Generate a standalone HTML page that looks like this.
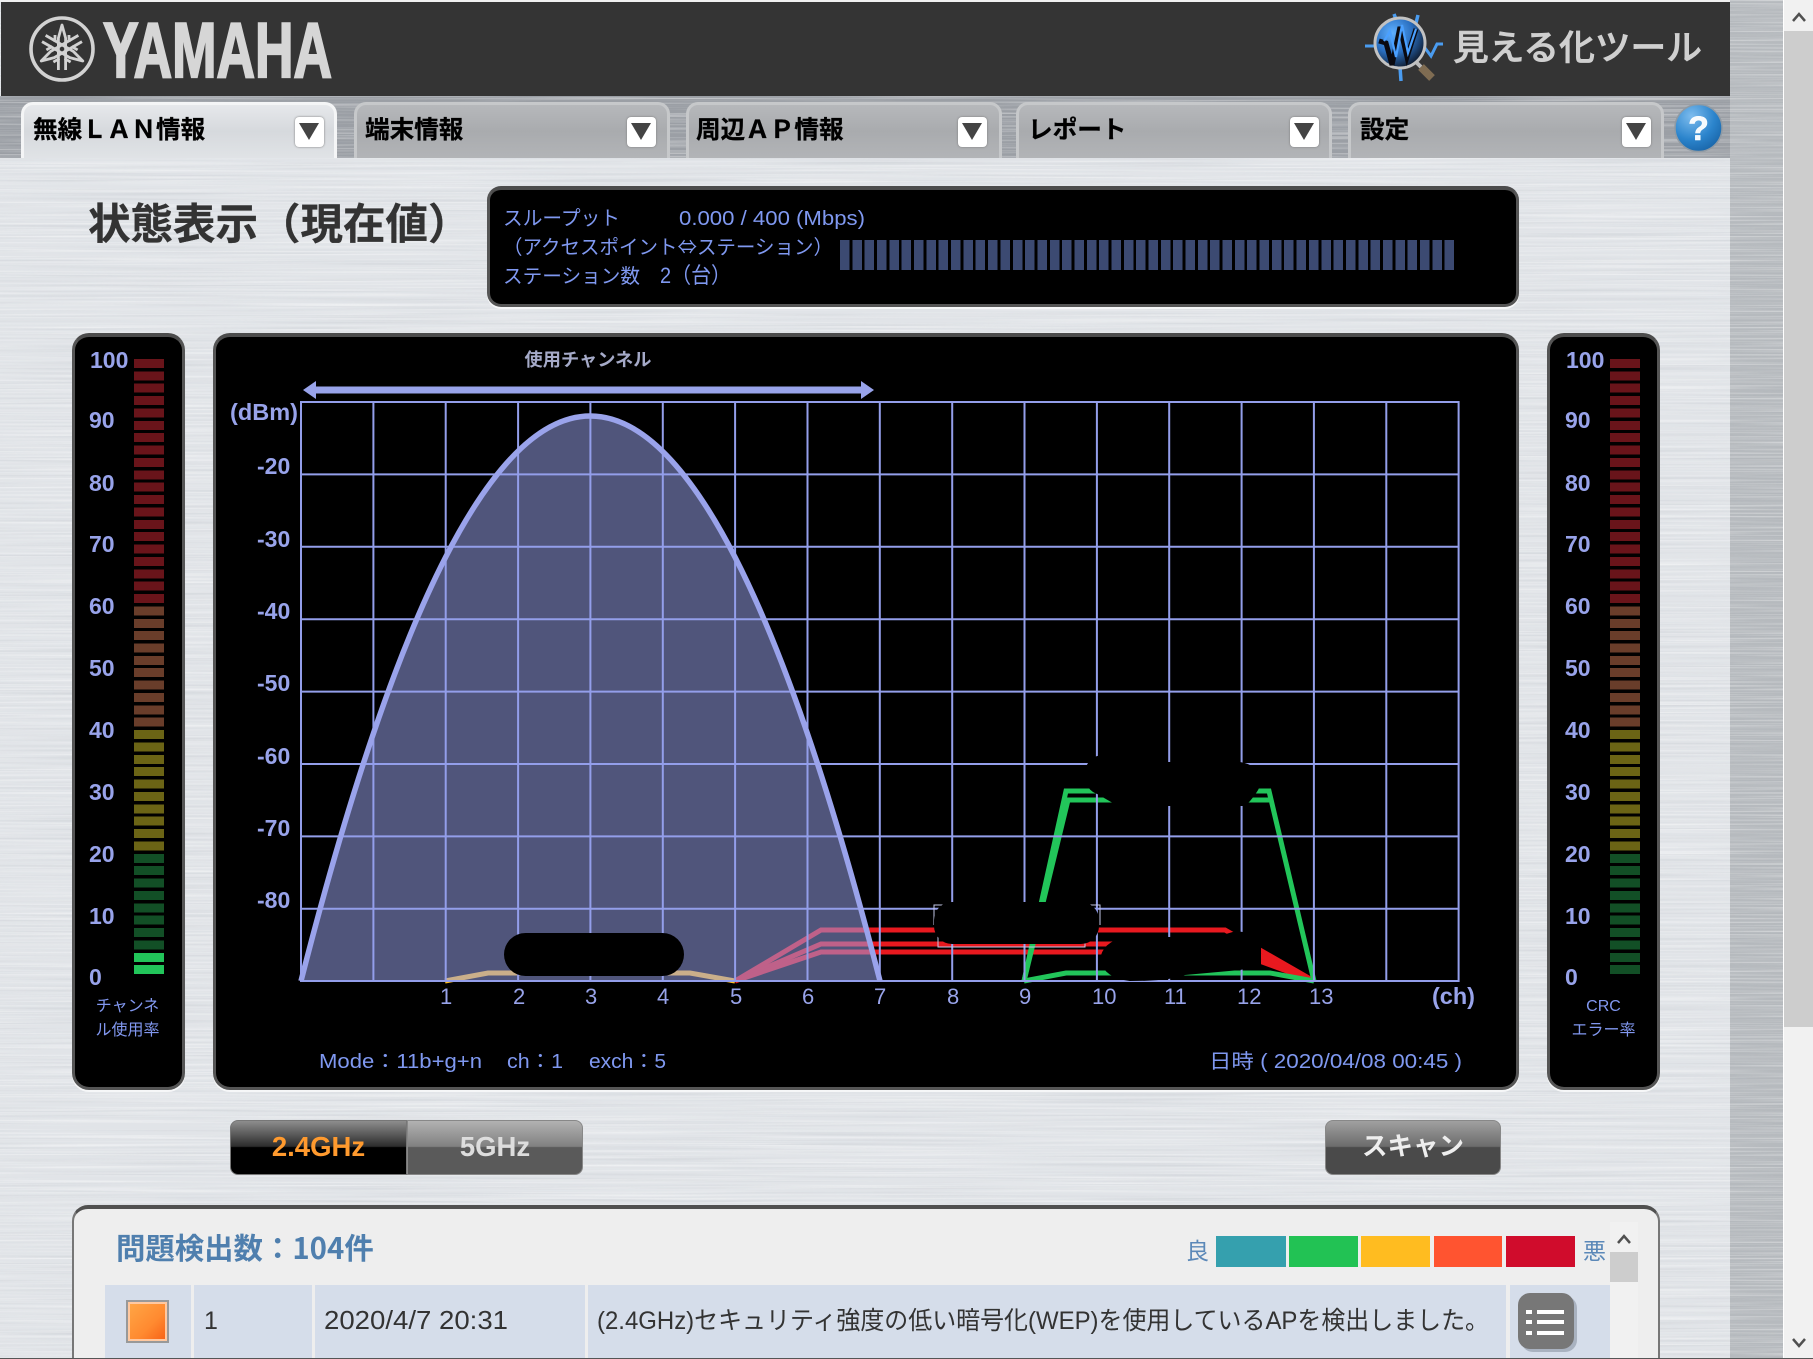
<!DOCTYPE html>
<html lang="ja"><head><meta charset="utf-8"><title>YAMAHA 見える化ツール</title>
<style>
html,body{margin:0;padding:0;width:1813px;height:1359px;overflow:hidden;background:#e2e5e9}
*{box-sizing:border-box}
body{position:relative;font-family:"Liberation Sans","Noto Sans CJK JP",sans-serif}
.a{position:absolute}
.t{position:absolute;white-space:nowrap;line-height:1}
.tab{position:absolute;top:102px;height:56px;width:316px;border:3px solid #c6c8ca;border-bottom:0;border-radius:12px 12px 0 0;background:linear-gradient(#b6b8bb,#a9abae 50%,#b2b4b7)}
.tab.on{border-color:#f4f5f6;background:linear-gradient(#e6e8eb,#d6d9dd 50%,#e0e3e6)}
.tt{position:absolute;top:116px;font-size:24.600px;font-weight:700;color:#000;line-height:1;white-space:nowrap;font-family:"Noto Sans CJK JP",sans-serif;-webkit-text-stroke:.3px #000}
.dd{position:absolute;top:117px;width:29px;height:30px;background:#fff;border-radius:4px;box-shadow:0 0 2px #777}
.dd:after{content:"";position:absolute;left:4px;top:6px;border-left:10.5px solid transparent;border-right:10.5px solid transparent;border-top:17px solid #444}
.panel{position:absolute;background:#000;border:3px solid #555;border-top:4px solid #4c4c4c;border-radius:17px;box-shadow:0 2px 0 #f6f7f8}
.meter{position:absolute;top:359px;width:30px;height:616px;background:repeating-linear-gradient(to bottom,transparent 0,transparent 9px,#000 9px,#000 12.37px),linear-gradient(to bottom,#69141a 0,#69141a 247px,#693d2a 247px,#693d2a 371px,#6b6415 371px,#6b6415 494px,#124f26 494px,#124f26 593px,#22c55a 593px,#22c55a 616px)}
.n{position:absolute;font-weight:700;font-size:23px;line-height:1;color:#98a3ea}
.ml{position:absolute;width:113px;text-align:center;font-size:16px;color:#8197ef;line-height:24px;font-family:"Liberation Sans","Noto Sans CJK JP",sans-serif}
.btn{position:absolute;top:1120px;height:55px;color:#eee;font-weight:700;font-size:27.500px;text-align:center;line-height:52px;font-family:"Liberation Sans","Noto Sans CJK JP",sans-serif}
.cell{position:absolute;top:1285px;height:74px;background:#d5ddea}
.sw{position:absolute;top:1236px;height:31px}
</style></head><body>

<svg class="a" style="left:0;top:0" width="1813" height="1359">
<defs><filter id="br" x="0" y="0" width="100%" height="100%"><feTurbulence type="fractalNoise" baseFrequency="0.004 0.55" numOctaves="2" seed="7"/><feColorMatrix values="0 0 0 0 1 0 0 0 0 1 0 0 0 0 1 2.6 0 0 0 -1.15"/></filter>
<filter id="br2" x="0" y="0" width="100%" height="100%"><feTurbulence type="fractalNoise" baseFrequency="0.004 0.4" numOctaves="2" seed="21"/><feColorMatrix values="0 0 0 0 0.35 0 0 0 0 0.38 0 0 0 0 0.42 2.2 0 0 0 -1.05"/></filter></defs>
<rect width="1730" height="1359" fill="#e1e4e8"/>
<rect y="96" width="1730" height="62" fill="#9b9fa5"/>
<rect x="1730" width="54" height="1359" fill="#b6babe"/>
<rect width="1784" height="1359" filter="url(#br)" opacity=".45"/>
<rect width="1784" height="1359" filter="url(#br2)" opacity=".22"/>
</svg>

<!-- header -->
<div class="a" style="left:0;top:0;width:1730px;height:2px;background:#f0f0f0"></div>
<div class="a" style="left:1px;top:2px;width:1729px;height:94px;background:#343434"></div>
<svg class="a" style="left:0;top:0" width="1730" height="96">
<circle cx="62" cy="49" r="31" fill="none" stroke="#d2d2d2" stroke-width="3.6"/>
<g fill="none" stroke="#d2d2d2" stroke-width="2.800" stroke-linejoin="round">
<g transform="translate(62,49)"><path d="M-3.6 21V-11L0 -24L3.6 -11V21"/><path d="M-7 -7V-14M7 -7V-14"/></g>
<g transform="translate(62,49) rotate(120)"><path d="M-3.6 21V-11L0 -24L3.6 -11V21"/><path d="M-7 -7V-14M7 -7V-14"/></g>
<g transform="translate(62,49) rotate(240)"><path d="M-3.6 21V-11L0 -24L3.6 -11V21"/><path d="M-7 -7V-14M7 -7V-14"/></g>
</g>
<text x="103" y="77" font-family="Liberation Sans" font-weight="700" font-size="78" fill="#d6d6d6" stroke="#d6d6d6" stroke-width="2.2" textLength="229" lengthAdjust="spacingAndGlyphs">YAMAHA</text>
<defs><radialGradient id="mg" cx=".35" cy=".3" r=".8"><stop offset="0" stop-color="#5fb0ff"/><stop offset=".5" stop-color="#2a6fc0"/><stop offset="1" stop-color="#0a0a10"/></radialGradient></defs>
<path d="M1365 46H1375M1425 48l6 8 6-12h6" fill="none" stroke="#4a9cf0" stroke-width="3"/>
<path d="M1394 14l3 8M1418 15l-2 8M1401 81l-1-14" fill="none" stroke="#4a9cf0" stroke-width="3.5"/>
<circle cx="1400" cy="43" r="25" fill="url(#mg)" stroke="#c2c2c2" stroke-width="3"/>
<path d="M1379 41l7 2 6 22 8-38 7 30 9-28" fill="none" stroke="#0a0a10" stroke-width="5"/>
<path d="M1384 41l6-10 6 26 6-32 6 28 8-24" fill="none" stroke="#4aa0ff" stroke-width="2.2"/>
<path d="M1417 63l4 4" stroke="#bbb" stroke-width="4"/><path d="M1421 67l11 11" stroke="#7f6c52" stroke-width="8"/>
<text x="1453" y="60" font-family="Noto Sans CJK JP" font-weight="500" font-size="35" fill="#cfcfcf" stroke="#cfcfcf" stroke-width=".7" textLength="249" lengthAdjust="spacingAndGlyphs">見える化ツール</text>
</svg>

<!-- tabs -->
<div class="tab on" style="left:21px"></div><div class="tab" style="left:354px"></div><div class="tab" style="left:686px"></div><div class="tab" style="left:1016px"></div><div class="tab" style="left:1348px"></div>
<div class="tt" style="left:33px">無線ＬＡＮ情報</div><div class="tt" style="left:365px">端末情報</div><div class="tt" style="left:696px">周辺ＡＰ情報</div><div class="tt" style="left:1028px">レポート</div><div class="tt" style="left:1360px">設定</div>
<div class="dd" style="left:295px"></div><div class="dd" style="left:627px"></div><div class="dd" style="left:958px"></div><div class="dd" style="left:1290px"></div><div class="dd" style="left:1622px"></div>
<svg class="a" style="left:1673px;top:101px" width="52" height="54"><defs><radialGradient id="hg2" cx=".35" cy=".25" r=".9"><stop offset="0" stop-color="#7dbcee"/><stop offset=".55" stop-color="#2b84cc"/><stop offset="1" stop-color="#145c9e"/></radialGradient></defs><circle cx="25.5" cy="27" r="23.5" fill="url(#hg2)" stroke="#8f9aa4" stroke-width="1.5"/><text x="25.5" y="39" text-anchor="middle" font-family="Liberation Sans" font-weight="700" font-size="34" fill="#fff" stroke="#fff" stroke-width=".6" fill-opacity=".95">?</text></svg>

<!-- title -->
<div class="t" style="left:88px;top:201px;font-size:42.500px;font-weight:700;color:#333;font-family:'Noto Sans CJK JP',sans-serif;-webkit-text-stroke:.3px #333">状態表示（現在値）</div>

<!-- status -->
<div class="panel" style="left:487px;top:186px;width:1032px;height:121px;border-radius:14px"></div>
<svg class="a" style="left:0;top:0" width="1813" height="340" font-family="Liberation Sans,Noto Sans CJK JP" font-size="20" fill="#7f98f0">
<text x="503" y="225" textLength="117" lengthAdjust="spacingAndGlyphs">スループット</text>
<text x="679" y="225" textLength="186" lengthAdjust="spacingAndGlyphs">0.000 / 400 (Mbps)</text>
<text x="503" y="254" textLength="330" lengthAdjust="spacingAndGlyphs" font-family="Noto Sans CJK JP">（アクセスポイント⇔ステーション）</text>
<text x="503" y="283" textLength="137" lengthAdjust="spacingAndGlyphs">ステーション数</text>
<text x="660" y="283" textLength="71" lengthAdjust="spacingAndGlyphs" font-size="22">2（台）</text>
</svg>
<div class="a" style="left:840px;top:240px;width:615px;height:30px;background:repeating-linear-gradient(to right,#3c4a72 0,#3c4a72 9.5px,#000 9.5px,#000 12.34px)"></div>

<!-- panels -->
<div class="panel" style="left:72px;top:333px;width:113px;height:757px"></div>
<div class="panel" style="left:213px;top:333px;width:1306px;height:757px"></div>
<div class="panel" style="left:1547px;top:333px;width:113px;height:757px"></div>
<div class="meter" style="left:134px"></div>
<div class="meter" style="left:1610px;background:repeating-linear-gradient(to bottom,transparent 0,transparent 9px,#000 9px,#000 12.37px),linear-gradient(to bottom,#69141a 0,#69141a 247px,#693d2a 247px,#693d2a 371px,#6b6415 371px,#6b6415 494px,#124f26 494px)"></div>

<div class="n" style="left:90px;top:349px">100</div><div class="n" style="left:89px;top:409px">90</div><div class="n" style="left:89px;top:472px">80</div><div class="n" style="left:89px;top:533px">70</div><div class="n" style="left:89px;top:595px">60</div><div class="n" style="left:89px;top:657px">50</div><div class="n" style="left:89px;top:719px">40</div><div class="n" style="left:89px;top:781px">30</div><div class="n" style="left:89px;top:843px">20</div><div class="n" style="left:89px;top:905px">10</div><div class="n" style="left:89px;top:966px">0</div>
<div class="n" style="left:1566px;top:349px">100</div><div class="n" style="left:1565px;top:409px">90</div><div class="n" style="left:1565px;top:472px">80</div><div class="n" style="left:1565px;top:533px">70</div><div class="n" style="left:1565px;top:595px">60</div><div class="n" style="left:1565px;top:657px">50</div><div class="n" style="left:1565px;top:719px">40</div><div class="n" style="left:1565px;top:781px">30</div><div class="n" style="left:1565px;top:843px">20</div><div class="n" style="left:1565px;top:905px">10</div><div class="n" style="left:1565px;top:966px">0</div>
<div class="ml" style="left:71px;top:995px">チャンネ<br>ル使用率</div>
<div class="ml" style="left:1547px;top:995px">CRC<br>エラー率</div>

<!-- chart -->
<svg class="a" style="left:0;top:0" width="1813" height="1100" font-family="Liberation Sans,Noto Sans CJK JP">
<!-- arrow -->
<text x="588" y="366" text-anchor="middle" font-size="18" font-weight="700" fill="#a5aac8" textLength="127" lengthAdjust="spacingAndGlyphs">使用チャンネル</text>
<path d="M303 390L316 381V386.500H861V381L874 390L861 399V393.500H316V399Z" fill="#98a3ea"/>
<!-- signal lines under fill -->
<g fill="none" stroke-width="5" stroke-linejoin="miter">
<path d="M445 981L488 973H690L735 981" stroke="#ffbc20"/>
<path d="M735 981L821 930H1225L1314 981" stroke="#e8191f"/>
<path d="M735 981L821 944H1235L1314 981" stroke="#e8191f"/>
<path d="M735 981L821 952H1235L1314 981" stroke="#e8191f"/>
<path d="M1024 981L1066 791H1269L1314 981" stroke="#22c55a"/>
<path d="M1024 981L1068 800H1269" stroke="#22c55a"/>
<path d="M1024 981L1066 973H1270L1314 981" stroke="#22c55a"/>
</g>
<!-- fill -->
<path d="M301 981Q590 -149 880 981Z" fill="#9aa3eb" fill-opacity=".52"/>
<!-- grid -->
<g fill="none" stroke="#939eea" stroke-width="2">
<rect x="301" y="402" width="1157.600" height="579"/>
<path d="M373.400 402V981M445.700 402V981M518.100 402V981M590.400 402V981M662.800 402V981M735.100 402V981M807.500 402V981M879.800 402V981M952.200 402V981M1024.500 402V981M1096.900 402V981M1169.200 402V981M1241.600 402V981M1313.900 402V981M1386.300 402V981"/>
<path d="M301 474.400H1458M301 546.800H1458M301 619.200H1458M301 691.600H1458M301 764H1458M301 836.400H1458M301 908.800H1458"/>
</g>
<!-- curve -->
<path d="M301 981Q590 -149 880 981" fill="none" stroke="#9aa3eb" stroke-width="5.500"/>
<!-- redaction blobs -->
<rect x="504" y="933" width="180" height="43" rx="21.500" fill="#000"/>
<path d="M934 925V905H1100V925M938 925V947H1085V925" fill="none" stroke="#c4c8e8" stroke-width="1"/>
<rect x="934" y="902" width="165" height="42" rx="18" fill="#000"/>
<rect x="1085" y="755" width="55" height="40" rx="18" fill="#000"/>
<path d="M1092 791L1118 806H1245Q1256 796 1261 784V778Q1258 765 1240 762H1110Q1092 765 1092 791Z" fill="#000"/>
<path d="M1100 960Q1102 942 1125 937H1215L1226 934L1236 931L1256 934L1261 945V966L1240 970L1185 975Q1170 981 1130 981Q1104 978 1100 960Z" fill="#000"/>
<!-- y axis labels -->
<g font-size="23" font-weight="700" fill="#98a3ea">
<text x="230" y="420" textLength="68" lengthAdjust="spacingAndGlyphs">(dBm)</text>
<text x="257" y="474">-20</text><text x="257" y="547">-30</text><text x="257" y="619">-40</text><text x="257" y="691">-50</text><text x="257" y="764">-60</text><text x="257" y="836">-70</text><text x="257" y="908">-80</text>
<text x="1432" y="1004" textLength="43" lengthAdjust="spacingAndGlyphs">(ch)</text>
</g>
<g font-size="22" fill="#98a3ea">
<text x="440" y="1004">1</text><text x="513" y="1004">2</text><text x="585" y="1004">3</text><text x="657" y="1004">4</text><text x="730" y="1004">5</text><text x="802" y="1004">6</text><text x="874" y="1004">7</text><text x="947" y="1004">8</text><text x="1019" y="1004">9</text><text x="1092" y="1004">10</text><text x="1164" y="1004">11</text><text x="1237" y="1004">12</text><text x="1309" y="1004">13</text>
</g>
<g font-size="20" fill="#7f98f0">
<text x="319" y="1068" textLength="163" lengthAdjust="spacingAndGlyphs">Mode：11b+g+n</text>
<text x="507" y="1068" textLength="56" lengthAdjust="spacingAndGlyphs">ch：1</text>
<text x="589" y="1068" textLength="77" lengthAdjust="spacingAndGlyphs">exch：5</text>
<text x="1209" y="1068" textLength="253" lengthAdjust="spacingAndGlyphs">日時 ( 2020/04/08 00:45 )</text>
</g>
</svg>

<!-- buttons -->
<div class="btn" style="left:230px;width:177px;border-radius:8px 0 0 8px;border:1px solid #777;background:linear-gradient(#8d8d8d,#2c2c2c 48%,#000 50%,#000);color:#ff9a2e">2.4GHz</div>
<div class="btn" style="left:407px;width:176px;border-radius:0 8px 8px 0;border:1px solid #888;background:linear-gradient(#b2b2b2,#808080 48%,#5a5a5a 50%,#5a5a5a);color:#ddd">5GHz</div>
<div class="btn" style="left:1325px;width:176px;border-radius:8px;border:1px solid #888;background:linear-gradient(#a0a0a0,#6c6c6c 48%,#4a4a4a 50%,#4a4a4a);color:#eee;font-size:25.500px">スキャン</div>

<!-- lower panel -->
<div class="a" style="left:72px;top:1205px;width:1588px;height:170px;background:#eee;border:2px solid #777;border-top:4px solid #505050;border-radius:16px 16px 0 0"></div>
<div class="t" style="left:116px;top:1233px;font-size:29.400px;font-weight:700;color:#4f7fae;font-family:'Noto Sans CJK JP',sans-serif">問題検出数：104件</div>
<div class="t" style="left:1186px;top:1240px;font-size:23px;color:#5b88b8">良</div>
<div class="sw" style="left:1216px;width:70px;background:#35a0ae"></div>
<div class="sw" style="left:1289px;width:69px;background:#22c254"></div>
<div class="sw" style="left:1361px;width:69px;background:#ffbc20"></div>
<div class="sw" style="left:1434px;width:68px;background:#ff5430"></div>
<div class="sw" style="left:1506px;width:69px;background:#d00c2c"></div>
<div class="t" style="left:1583px;top:1240px;font-size:23px;color:#5b88b8">悪</div>
<!-- inner scrollbar -->
<div class="a" style="left:1610px;top:1222px;width:28px;height:137px;background:#f1f1f1"></div>
<div class="a" style="left:1610px;top:1252px;width:28px;height:30px;background:#cdcdcd"></div>
<svg class="a" style="left:1615px;top:1232px" width="18" height="14"><path d="M3 11L9 4L15 11" fill="none" stroke="#505050" stroke-width="2.5"/></svg>

<!-- row -->
<div class="cell" style="left:105px;width:86px"></div>
<div class="cell" style="left:194px;width:118px"></div>
<div class="cell" style="left:315px;width:270px"></div>
<div class="cell" style="left:588px;width:918px"></div>
<div class="cell" style="left:1510px;width:100px"></div>
<div class="a" style="left:126px;top:1300px;width:43px;height:43px;background:#999;padding:2px"><div style="width:39px;height:39px;border:2px solid #ffc8a0;background:linear-gradient(135deg,#ffa545,#ff8a30 60%,#f86418)"></div></div>
<svg class="a" style="left:0;top:1285px" width="1813" height="74" font-family="Liberation Sans,Noto Sans CJK JP" font-size="25" fill="#333">
<text x="204" y="44">1</text>
<text x="324" y="44" textLength="184" lengthAdjust="spacingAndGlyphs" font-size="26">2020/4/7 20:31</text>
<text x="597" y="44" textLength="892" lengthAdjust="spacingAndGlyphs">(2.4GHz)セキュリティ強度の低い暗号化(WEP)を使用しているAPを検出しました。</text>
</svg>
<div class="a" style="left:1518px;top:1293px;width:56px;height:56px;background:#777;border-radius:12px;box-shadow:3px 3px 0 #a9b2c0"></div>
<svg class="a" style="left:1518px;top:1293px" width="56" height="56" fill="#fff"><rect x="8" y="17" width="6" height="4"/><rect x="19" y="17" width="27" height="4"/><rect x="8" y="27" width="6" height="4"/><rect x="19" y="27" width="27" height="4"/><rect x="8" y="38" width="6" height="4"/><rect x="19" y="38" width="27" height="4"/></svg>

<!-- page scrollbar -->
<div class="a" style="left:1783px;top:0;width:30px;height:1359px;background:#f1f1f1;border-left:1px solid #fff"></div>
<div class="a" style="left:1784px;top:31px;width:29px;height:996px;background:#cdcdcd"></div>
<svg class="a" style="left:1790px;top:9px" width="18" height="16"><path d="M3 12L9 5L15 12" fill="none" stroke="#505050" stroke-width="2.5"/></svg>
<svg class="a" style="left:1790px;top:1335px" width="18" height="16"><path d="M3 4L9 11L15 4" fill="none" stroke="#505050" stroke-width="2.5"/></svg>
<div class="a" style="left:0;top:1358px;width:1813px;height:1px;background:#555"></div>
</body></html>
